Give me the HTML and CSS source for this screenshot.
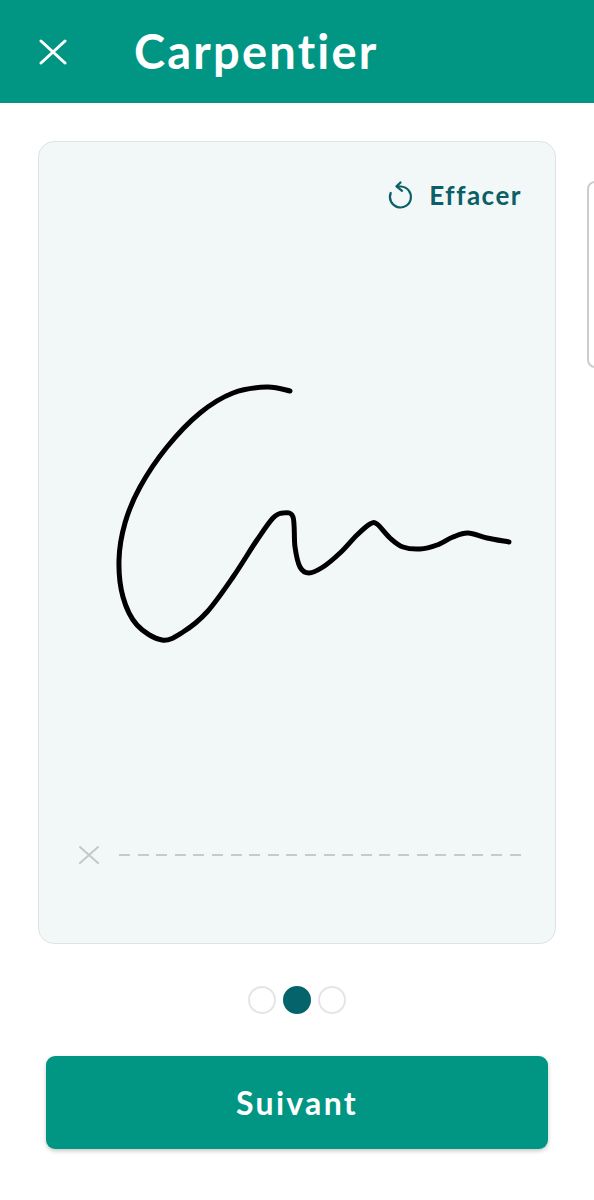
FILE: index.html
```html
<!DOCTYPE html>
<html lang="fr">
<head>
<meta charset="utf-8">
<title>Carpentier</title>
<link rel="stylesheet" href="styles.css">
</head>
<body>
<div class="app">
  <header class="topbar">
    <svg class="close" viewBox="0 0 28 26" aria-hidden="true"><path d="M2 2 L26 24 M26 2 L2 24"/></svg>
    <h1 class="title">Carpentier</h1>
  </header>
  <main class="slides">
    <section class="card">
      <div class="card-top">
        <button class="clear">
          <svg class="clear-icon" viewBox="0 0 24 28" aria-hidden="true"><path d="M2.7 12 A10.5 10.5 0 1 0 13 5.5 L9 5.5"/><path d="M12.5 1.5 L8.5 5.4 L14 9.8"/></svg>
          <span>Effacer</span>
        </button>
      </div>
      <svg class="signature" viewBox="38 141 518 803" aria-hidden="true"><path d="M290 391 C286.2 390.3 276.5 386.7 267 387 C257.5 387.3 244.2 388.7 233 393 C221.8 397.3 211 404 200 413 C189 422 177 434.7 167 447 C157 459.3 147 474.3 140 487 C133 499.7 128.5 510.8 125 523 C121.5 535.2 119.3 547.7 119 560 C118.7 572.3 120 586.2 123 597 C126 607.8 130.5 617.8 137 625 C143.5 632.2 154.3 638.8 162 640 C169.7 641.2 175.5 636.7 183 632 C190.5 627.3 198.7 621.2 207 612 C215.3 602.8 224.7 589 233 577 C241.3 565 250.3 549.8 257 540 C263.7 530.2 268.7 522.5 273 518 C277.3 513.5 279.7 513.2 283 513 C286.3 512.8 291 511.3 293 517 C295 522.7 293.8 538.7 295 547 C296.2 555.3 297.7 562.7 300 567 C302.3 571.3 305.2 573 309 573 C312.8 573 317.8 570.3 323 567 C328.2 563.7 334.3 558.3 340 553 C345.7 547.7 352 539.8 357 535 C362 530.2 366.7 525.8 370 524 C373.3 522.2 373.7 521.7 377 524 C380.3 526.3 385.7 534.2 390 538 C394.3 541.8 398 545.2 403 547 C408 548.8 414.3 549.3 420 549 C425.7 548.7 431.5 547 437 545 C442.5 543 447.8 539 453 537 C458.2 535 462.3 532.8 468 533 C473.7 533.2 480.2 536.5 487 538 C493.8 539.5 505.3 541.3 509 542"/></svg>
      <div class="sign-line">
        <svg class="sign-x" viewBox="0 0 20 18" aria-hidden="true"><path d="M1 1 L19 17 M19 1 L1 17"/></svg>
        <div class="dashes"></div>
      </div>
    </section>
    <section class="card card-next"></section>
  </main>
  <div class="dots">
    <span class="dot"></span>
    <span class="dot dot-active"></span>
    <span class="dot"></span>
  </div>
  <button class="next">Suivant</button>
</div>
</body>
</html>
```
FILE: styles.css
```css
* { box-sizing: border-box; }
html, body { margin: 0; padding: 0; background: #fff; }
body { font-family: Lato, "Open Sans", sans-serif; }
.app { width: 594px; height: 1200px; overflow: hidden; display: flex; flex-direction: column; }
.topbar { height: 103px; flex: none; background: #019684; display: flex; align-items: center; padding-left: 39px; }
.close { width: 28px; height: 26px; flex: none; margin-right: 67px; }
.close path { fill: none; stroke: #fff; stroke-width: 3; stroke-linecap: round; }
.title { margin: 0; color: #fff; font-size: 47px; font-weight: 700; line-height: 1; letter-spacing: 2.2px; }
.slides { display: flex; align-items: flex-start; gap: 31px; padding: 38px 0 0 38px; flex: none; }
.card { position: relative; flex: none; width: 518px; height: 803px; background: #f2f7f8; border: 1.5px solid #dfe3e4; border-radius: 16px; display: flex; flex-direction: column; justify-content: space-between; }
.card-next { height: 187px; margin-top: 40px; width: 300px; background: #fff; border: 2px solid #c9cdce; border-radius: 8px; }
.card-top { display: flex; justify-content: flex-end; padding: 38px 33px 0 0; }
.clear { display: flex; align-items: center; gap: 17px; padding: 0; border: 0; background: none; color: #0b5f66; font: 700 26px/30px Lato, sans-serif; letter-spacing: 1.5px; }
.clear-icon { width: 24px; height: 28px; overflow: visible; }
.clear-icon path { fill: none; stroke: #0b5f66; stroke-width: 2.2; stroke-linecap: round; stroke-linejoin: round; }
.signature { position: absolute; inset: -1.5px; width: 518px; height: 803px; pointer-events: none; }
.signature path { fill: none; stroke: #000; stroke-width: 5; stroke-linecap: round; stroke-linejoin: round; }
.sign-line { display: flex; align-items: center; gap: 20px; padding: 0 33px 79px 40px; }
.sign-x { width: 20px; height: 18px; flex: none; }
.sign-x path { fill: none; stroke: #c4c8c9; stroke-width: 2; stroke-linecap: round; }
.dashes { flex: 1; height: 2px; background: repeating-linear-gradient(to right, #c5cacb 0 11px, transparent 11px 18.6px); }
.dots { display: flex; justify-content: center; align-items: center; gap: 7px; margin-top: 42px; flex: none; }
.dot { width: 28px; height: 28px; border-radius: 50%; background: #fff; border: 2px solid #e4e6e6; }
.dot-active { background: #05636b; border-color: #05636b; }
.next { flex: none; align-self: center; width: 502px; height: 93px; margin-top: 42px; padding-top: 2px; border: 0; border-radius: 9px; background: #019684; color: #fff; font: 700 32px/1 Lato, sans-serif; letter-spacing: 2.3px; box-shadow: 0 2px 4px rgba(0,0,0,.22); }
```
